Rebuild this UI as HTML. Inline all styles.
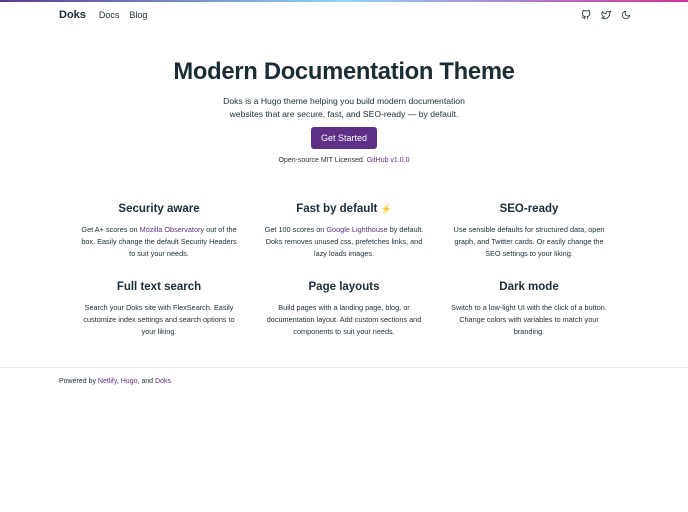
<!DOCTYPE html>
<html><head><meta charset="utf-8"><style>
*{margin:0;padding:0;box-sizing:border-box}
body{width:688px;height:512px;background:#fff;font-family:"Liberation Sans",sans-serif;color:#1d2d35;position:relative;overflow:hidden}
.bar{height:2px;background:linear-gradient(90deg,#5b3a8c,#8ed6fb 50%,#d32e9d)}
.nav{position:absolute;top:9px;left:59px;font-size:9px;display:flex;align-items:center}
.nav b{font-size:11px;margin-right:13px}
.nav span{margin-right:10px}
.icons{position:absolute;top:10px;left:581px;display:flex;gap:10px}
h1{position:absolute;top:58px;left:0;width:688px;text-align:center;font-size:23.8px;font-weight:bold;letter-spacing:-0.3px}
.lead{position:absolute;top:95px;left:0;width:688px;text-align:center;font-size:8.6px;line-height:12.5px}
.btn{position:absolute;top:127px;left:311px;width:66px;height:22px;background:#5d2f86;color:#fff;border-radius:3px;font-size:9px;text-align:center;line-height:22px}
.small{position:absolute;top:157px;left:0;width:688px;text-align:center;font-size:7px}
a{color:#5d2f86;text-decoration:none}
.f{position:absolute;width:160px;text-align:center}
.f h3{font-size:11.5px;font-weight:bold;margin-bottom:8px;line-height:14px;height:14px}
.f h3 span{font-size:9px;color:#f5c542}
.f p{font-size:7.3px;line-height:12px}
.foot{position:absolute;top:367px;left:0;width:688px;border-top:1px solid #e9ecef}
.foot p{position:absolute;top:10px;left:59px;font-size:7px;white-space:nowrap}
</style></head><body>
<div class="bar"></div>
<div class="nav"><b>Doks</b><span>Docs</span><span>Blog</span></div>
<div class="icons">
<svg width="10" height="10" viewBox="0 0 24 24" fill="none" stroke="#1d2d35" stroke-width="2"><path d="M9 19c-5 1.5-5-2.5-7-3m14 6v-3.9a3.4 3.4 0 0 0-1-2.6c3.1-.4 6.4-1.5 6.4-7A5.4 5.4 0 0 0 20 4.8 5 5 0 0 0 19.9 1S18.7.6 16 2.5a13.4 13.4 0 0 0-7 0C6.3.6 5.1 1 5.1 1A5 5 0 0 0 5 4.8a5.4 5.4 0 0 0-1.5 3.7c0 5.4 3.3 6.6 6.4 7a3.4 3.4 0 0 0-1 2.6V22"/></svg>
<svg width="10" height="10" viewBox="0 0 24 24" fill="none" stroke="#1d2d35" stroke-width="2"><path d="M23 3a10.9 10.9 0 0 1-3.1 1.5 4.5 4.5 0 0 0-7.9 3v1A10.7 10.7 0 0 1 3 4s-4 9 5 13a11.6 11.6 0 0 1-7 2c9 5 20 0 20-11.5a4.5 4.5 0 0 0-.1-.8A7.7 7.7 0 0 0 23 3z"/></svg>
<svg width="10" height="10" viewBox="0 0 24 24" fill="none" stroke="#1d2d35" stroke-width="2"><path d="M21 12.8A9 9 0 1 1 11.2 3 7 7 0 0 0 21 12.8z"/></svg>
</div>
<h1>Modern Documentation Theme</h1>
<div class="lead">Doks is a Hugo theme helping you build modern documentation<br>websites that are secure, fast, and SEO-ready — by default.</div>
<div class="btn">Get Started</div>
<div class="small">Open-source MIT Licensed. <a>GitHub v1.0.0</a></div>

<div class="f" style="left:79px;top:202px"><h3>Security aware</h3><p>Get A+ scores on <a>Mozilla Observatory</a> out of the box. Easily change the default Security Headers to suit your needs.</p></div>
<div class="f" style="left:264px;top:202px"><h3>Fast by default <span>⚡</span></h3><p>Get 100 scores on <a>Google Lighthouse</a> by default. Doks removes unused css, prefetches links, and lazy loads images.</p></div>
<div class="f" style="left:449px;top:202px"><h3>SEO-ready</h3><p>Use sensible defaults for structured data, open graph, and Twitter cards. Or easily change the SEO settings to your liking.</p></div>
<div class="f" style="left:79px;top:280px"><h3>Full text search</h3><p>Search your Doks site with FlexSearch. Easily customize index settings and search options to your liking.</p></div>
<div class="f" style="left:264px;top:280px"><h3>Page layouts</h3><p>Build pages with a landing page, blog, or documentation layout. Add custom sections and components to suit your needs.</p></div>
<div class="f" style="left:449px;top:280px"><h3>Dark mode</h3><p>Switch to a low-light UI with the click of a button. Change colors with variables to match your branding.</p></div>

<div class="foot"><p>Powered by <a>Netlify</a>, <a>Hugo</a>, and <a>Doks</a></p></div>
</body></html>
